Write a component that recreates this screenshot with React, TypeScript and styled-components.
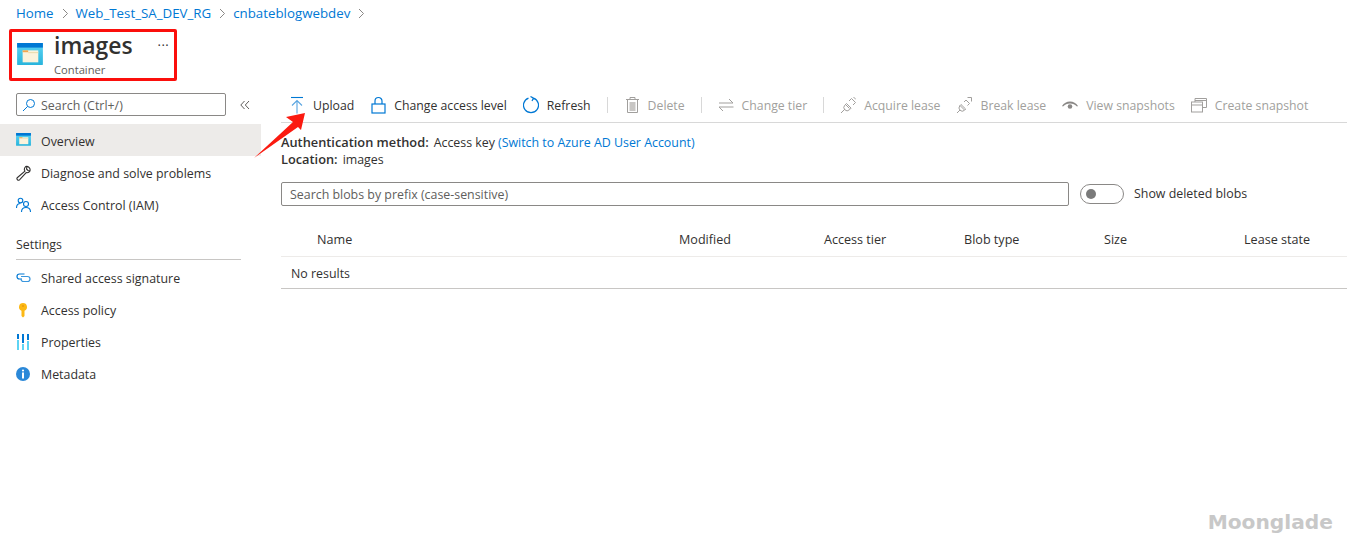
import React from "react";
import styled, { createGlobalStyle } from "styled-components";

const Global = createGlobalStyle`
  html, body { margin: 0; padding: 0; background: #fff; height: 100%; overflow: hidden; }
  body { font-family: "Open Sans", "Noto Sans", sans-serif; font-size: 12.4px; color: #323130; }
  * { box-sizing: border-box; }
`;

const Page = styled.div`position: relative; width: 1347px; height: 548px; overflow: hidden;`;
const Crumbs = styled.nav`display: flex; align-items: center; height: 26px; padding-left: 16px; gap: 7px; font-size: 13.3px; color: #0078d4;`;
const Chevron = styled.svg`width: 8px; height: 11px; fill: none; stroke: #8a8886; stroke-width: 1;`;
const Header = styled.header`display: flex; height: 67px; padding: 4px 0 0 17px;`;
const TitleIcon = styled.div`width: 26px; margin-top: 13px; margin-right: 11px;`;
const TitleBlock = styled.div`display: flex; flex-direction: column;`;
const Title = styled.h1`margin: 0; font-size: 22.9px; line-height: 31px; font-weight: 600; color: #323130;`;
const Subtitle = styled.div`font-size: 11.2px; line-height: 14px; margin-top: 2px; color: #605e5c;`;
const More = styled.div`margin: 7px 0 0 25px; height: 20px; font-size: 13px; line-height: 16px; letter-spacing: 0.5px; color: #323130;`;
const Body = styled.div`display: flex;`;
const Sidebar = styled.aside`width: 261px; flex: none;`;
const SearchRow = styled.div`display: flex; align-items: center; height: 23px; margin-left: 16px;`;
const SideSearch = styled.div`display: flex; align-items: center; width: 210px; height: 23px; padding: 1px 0 0 5px; border: 1px solid #8a8886; border-radius: 2px; gap: 5px; color: #605e5c;`;
const CollapseIcon = styled.svg`width: 10px; height: 10px; margin-left: 14px; fill: none; stroke: #605e5c; stroke-width: 1;`;
const NavList = styled.div`margin-top: 8px;`;
const NavItem = styled.div<{ $active?: boolean }>`display: flex; align-items: center; height: 32px; padding: 2px 0 0 16px; gap: 10px; color: #323130; background: ${(p) => (p.$active ? "#edebe9" : "transparent")};`;
const NavIcon = styled.svg`width: 15px; height: 16px; flex: none;`;
const SectionTitle = styled.div`display: flex; align-items: center; margin: 7px 20px 0 16px; padding-top: 2px; border-bottom: 1px solid #c8c6c4; height: 33px; font-size: 12.4px; font-weight: 500;`;
const SectionList = styled.div`padding-top: 1px;`;
const Main = styled.main`flex: 1; padding-left: 20px; margin-top: -5px;`;
const Toolbar = styled.div`display: flex; align-items: center; height: 35px; padding-left: 8px; gap: 16px; border-bottom: 1px solid #d8d8d8;`;
const Tool = styled.div<{ $off?: boolean }>`display: flex; align-items: center; gap: 8px; white-space: nowrap; font-size: 12.25px; color: ${(p) => (p.$off ? "#a19f9d" : "#323130")};`;
const ToolIcon = styled.svg`width: 16px; height: 18px; flex: none; fill: none;`;
const Divider = styled.div`width: 1px; height: 16px; background: #d8d8d8;`;
const Info = styled.div`margin-top: 11px; line-height: 17px;`;
const Strong = styled.strong`font-weight: 600; font-size: 12.8px; margin-right: 5px;`;
const InfoLink = styled.a`color: #0078d4; margin-left: 3px;`;
const FilterRow = styled.div`display: flex; align-items: center; margin-top: 14px;`;
const BlobSearch = styled.div`display: flex; align-items: center; width: 788px; height: 24px; border: 1px solid #8a8886; border-radius: 2px; padding-left: 8px; color: #605e5c;`;
const Toggle = styled.div`display: flex; align-items: center; width: 44px; height: 20px; margin: 0 10px 0 11px; padding-left: 5px; border: 1px solid #8a8886; border-radius: 10px;`;
const Knob = styled.div`width: 10px; height: 10px; border-radius: 50%; background: #7a7a7a;`;
const ToggleLabel = styled.span`color: #323130; margin-top: -1px;`;
const Table = styled.div`margin-top: 16px;`;
const HeadRow = styled.div`display: grid; grid-template-columns: 398px 145px 140px 140px 140px 1fr; align-items: center; height: 35px; border-bottom: 1px solid #edebe9; font-size: 12.6px; font-weight: 500;`;
const HeadCell = styled.div<{ $first?: boolean }>`padding-left: ${(p) => (p.$first ? "36px" : "0")};`;
const EmptyRow = styled.div`display: flex; align-items: center; height: 32px; padding: 2px 0 0 10px; border-bottom: 1px solid #c8c6c4;`;
const RedBox = styled.div`position: absolute; left: 9px; top: 29px; width: 168px; height: 52px; border: 3px solid #fb0f0c; border-radius: 2px;`;
const Arrow = styled.svg`position: absolute; left: 250px; top: 108px; width: 60px; height: 54px;`;
const Watermark = styled.div`position: absolute; right: 14px; top: 509px; font-family: "DejaVu Sans", sans-serif; font-weight: 700; font-size: 20.2px; line-height: 26px; color: #c8c8c8;`;

const Chev = () => <Chevron viewBox="0 0 8 11"><path d="M2 1l4.500 4.500L2 10" /></Chevron>;

const ContainerIcon = ({ size = 26, id }: { size?: number; id: string }) => (
  <svg width={size} height={size * 0.85} viewBox="0 0 28 24">
    <defs>
      <linearGradient id={id} x1="0" x2="0" y1="0" y2="1"><stop offset="0" stopColor="#5ed4f4" /><stop offset="1" stopColor="#28b4dc" /></linearGradient>
    </defs>
    <rect width="28" height="24" rx="1" fill={`url(#${id})`} />
    <rect width="28" height="5" fill="#0078d4" />
    <rect x="6" y="8" width="17" height="13" fill="#fbf3dc" />
    <rect x="6" y="8" width="6" height="2" fill="#f2a64c" />
    <rect x="12" y="10" width="11" height="1" fill="#e8d9a8" />
  </svg>
);

const plug = "M1 17l4-4M5.500 8.500l4 4M6.500 7.500L4.800 9.200a3.300 3.300 0 0 0 0 4.600 3.300 3.300 0 0 0 4.600 0l1.700-1.700ZM9 5l2.500-2.500 4 4L13 9M13.500 1l2.500 2.500";
const brokenPlug = "M1 17l3-3M4 9.500l4.500 4.500M5 8.500L3.800 9.800a3.300 3.300 0 0 0 .2 4.400 3.300 3.300 0 0 0 4.400.2l1.300-1.300ZM8 6l2-2 3.500 3.500-2 2M11.500 1.500l4 0 0 4";

export default function App() {
  return (
    <Page>
      <Global />
      <Crumbs>
        <span>Home</span><Chev /><span>Web_Test_SA_DEV_RG</span><Chev /><span>cnbateblogwebdev</span><Chev />
      </Crumbs>
      <Header>
        <TitleIcon><ContainerIcon id="big" /></TitleIcon>
        <TitleBlock>
          <Title>images</Title>
          <Subtitle>Container</Subtitle>
        </TitleBlock>
        <More>···</More>
      </Header>
      <Body>
        <Sidebar>
          <SearchRow>
            <SideSearch>
              <svg width="14" height="14" viewBox="0 0 14 14" fill="none" stroke="#0078d4" strokeWidth="1"><circle cx="8.500" cy="5.500" r="4" /><path d="M5.500 8.500L1 13" /></svg>
              Search (Ctrl+/)
            </SideSearch>
            <CollapseIcon viewBox="0 0 10 10"><path d="M4.500 1L.8 5l3.700 4M9 1L5.300 5 9 9" /></CollapseIcon>
          </SearchRow>
          <NavList>
            <NavItem $active>
              <NavIcon as="div"><ContainerIcon size={15} id="small" /></NavIcon>Overview
            </NavItem>
            <NavItem>
              <NavIcon viewBox="0 0 15 16" fill="none" stroke="#323130" strokeWidth="1.100"><path d="M9.500 1.500a3.600 3.600 0 0 1 4.500 4.300l-2-.3-1.500-1.500.5-2.300zM9.700 1.600a3.600 3.600 0 0 0-.8 4.500L1.500 12.500a1.500 1.500 0 0 0 2 2.300l6.700-7.200a3.600 3.600 0 0 0 3.900-1.900" /></NavIcon>
              Diagnose and solve problems
            </NavItem>
            <NavItem>
              <NavIcon viewBox="0 0 15 16" fill="none" stroke="#0078d4" strokeWidth="1.100"><circle cx="4.500" cy="3.500" r="2.300" /><path d="M.5 11c0-3 1.500-4.500 4-4.500" /><circle cx="10" cy="7" r="2.500" /><path d="M5.500 15c0-3 2-4.500 4.500-4.500s4.500 1.500 4.500 4.500" /></NavIcon>
              Access Control (IAM)
            </NavItem>
          </NavList>
          <SectionTitle>Settings</SectionTitle>
          <SectionList>
            <NavItem>
              <NavIcon viewBox="0 0 15 16" fill="none" strokeWidth="1.200"><path stroke="#0078d4" d="M8.500 4H3.500a2.500 2.500 0 0 0 0 5H6" /><path stroke="#3a96dd" d="M5 6.500h6.500a2.500 2.500 0 0 1 0 5H7.500A2.500 2.500 0 0 1 5 9" /></NavIcon>
              Shared access signature
            </NavItem>
            <NavItem>
              <NavIcon viewBox="0 0 15 16"><path fill="#fcb814" d="M7 1a4 4 0 0 1 1.500 7.700V14l-1.500 1.500L5.500 14V8.700A4 4 0 0 1 7 1z" /><circle cx="7" cy="4" r="1" fill="#e89a0c" /></NavIcon>
              Access policy
            </NavItem>
            <NavItem>
              <NavIcon viewBox="0 0 15 16">
                <rect x="1" y="0" width="2" height="5" fill="#0078d4" /><rect x="1" y="6" width="2" height="10" fill="#5ed4f4" />
                <rect x="6" y="0" width="2" height="9" fill="#0078d4" /><rect x="6" y="10" width="2" height="6" fill="#5ed4f4" />
                <rect x="11" y="0" width="2" height="6" fill="#0078d4" /><rect x="11" y="7" width="2" height="9" fill="#5ed4f4" />
              </NavIcon>
              Properties
            </NavItem>
            <NavItem>
              <NavIcon viewBox="0 0 15 16"><circle cx="7" cy="8" r="7" fill="#2b88d8" /><circle cx="7" cy="4.500" r="1.100" fill="#fff" /><rect x="6" y="6.500" width="2" height="6" fill="#fff" /></NavIcon>
              Metadata
            </NavItem>
          </SectionList>
        </Sidebar>
        <Main>
          <Toolbar>
            <Tool>
              <ToolIcon viewBox="0 0 16 18" stroke="#0078d4" strokeWidth="1.100"><path d="M2 1.500h12" /><path stroke="#5aa5e0" d="M8 17.500V5M3 9.500l5-5 5 5" /></ToolIcon>
              Upload
            </Tool>
            <Tool>
              <ToolIcon viewBox="0 0 16 18" stroke="#0078d4" strokeWidth="1.200"><rect x="2" y="8" width="13" height="9" /><path d="M5 8V5a3.500 3.500 0 0 1 7 0v3" /></ToolIcon>
              Change access level
            </Tool>
            <Tool>
              <ToolIcon viewBox="0 0 16 18" stroke="#0078d4" strokeWidth="1.200"><path d="M10.500 2.100a7.500 7.500 0 1 1-5 0M10.500 2.100L7.500 .5M10.500 2.100L9 5" /></ToolIcon>
              Refresh
            </Tool>
            <Divider />
            <Tool $off>
              <ToolIcon viewBox="0 0 16 18" stroke="#a19f9d"><path d="M2 3.500h13M6 3V1.500h5V3M3.500 3.500v13h10v-13" /><rect x="5.500" y="6" width="6" height="9" fill="#c8c6c4" stroke="none" /></ToolIcon>
              Delete
            </Tool>
            <Divider />
            <Tool $off>
              <ToolIcon viewBox="0 0 16 18" stroke="#a19f9d"><path d="M1 7h14l-4-4M15.500 11H1l4 4" /></ToolIcon>
              Change tier
            </Tool>
            <Divider />
            <Tool $off>
              <ToolIcon viewBox="0 0 16 18" stroke="#a19f9d"><path d={plug} /></ToolIcon>
              Acquire lease
            </Tool>
            <Tool $off>
              <ToolIcon viewBox="0 0 16 18" stroke="#a19f9d"><path d={brokenPlug} /></ToolIcon>
              Break lease
            </Tool>
            <Tool $off>
              <ToolIcon viewBox="0 0 16 18"><path d="M0 10c2-3 4.500-4.500 8-4.500S14 7 16 10l-1 .5C13 8.500 11 7.500 8 7.500S3 8.500 1 10.500z" fill="#8a8886" /><circle cx="8" cy="10.500" r="2.300" fill="#8a8886" /></ToolIcon>
              View snapshots
            </Tool>
            <Tool $off>
              <ToolIcon viewBox="0 0 16 18" stroke="#a19f9d"><rect x=".5" y="6" width="11" height="10" /><path d="M.5 9h11M4 6V2.500h11.500v9H11.500M4 4.500h11.500" /></ToolIcon>
              Create snapshot
            </Tool>
          </Toolbar>
          <Info>
            <div><Strong>Authentication method:</Strong>Access key<InfoLink>(Switch to Azure AD User Account)</InfoLink></div>
            <div><Strong>Location:</Strong>images</div>
          </Info>
          <FilterRow>
            <BlobSearch>Search blobs by prefix (case-sensitive)</BlobSearch>
            <Toggle><Knob /></Toggle>
            <ToggleLabel>Show deleted blobs</ToggleLabel>
          </FilterRow>
          <Table>
            <HeadRow>
              <HeadCell $first>Name</HeadCell>
              <HeadCell>Modified</HeadCell>
              <HeadCell>Access tier</HeadCell>
              <HeadCell>Blob type</HeadCell>
              <HeadCell>Size</HeadCell>
              <HeadCell>Lease state</HeadCell>
            </HeadRow>
            <EmptyRow>No results</EmptyRow>
          </Table>
        </Main>
      </Body>
      <RedBox />
      <Arrow viewBox="0 0 60 54"><polygon points="55,5 36,9 43,14 4,50 48,19 51,22" fill="#fb1a10" /></Arrow>
      <Watermark>Moonglade</Watermark>
    </Page>
  );
}
